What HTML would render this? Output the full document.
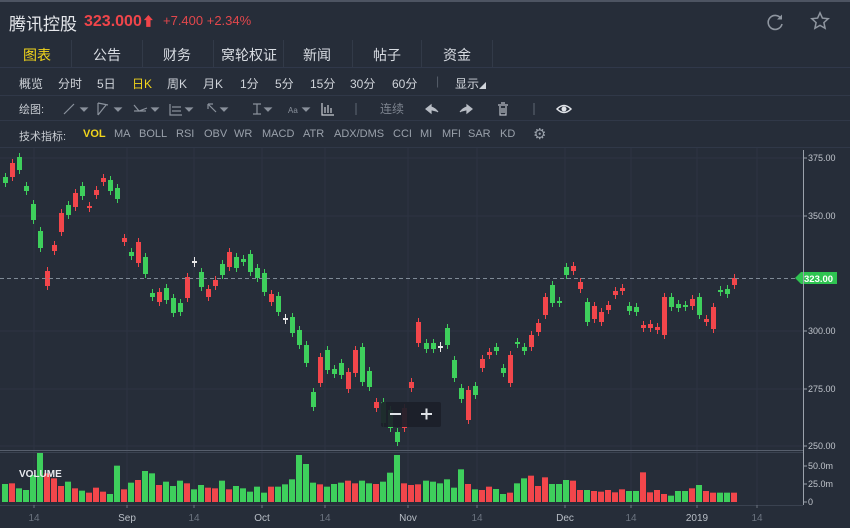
<!DOCTYPE html>
<html><head><meta charset="utf-8"><style>
*{margin:0;padding:0;box-sizing:border-box}
body{width:850px;height:528px;background:#262d39;font-family:"Liberation Sans","Noto Sans CJK SC",sans-serif;overflow:hidden;position:relative;color:#c9ced6}
.t{position:absolute;white-space:nowrap}
.line{position:absolute;left:0;width:850px;height:1px;background:#303848}
</style></head><body>
<div style="position:absolute;left:0;top:0;width:850px;height:2px;background:#4d5462"></div>
<div class="t" style="left:9px;top:10px;font-size:17px;color:#e6e8ec">腾讯控股</div>
<div class="t" style="left:84px;top:11px;font-size:16px;font-weight:bold;color:#f0454a">323.000<span style="font-size:13px">&#11014;</span></div>
<div class="t" style="left:163px;top:13px;font-size:13px;color:#e2474c">+7.400 +2.34%</div>
<svg style="position:absolute;left:766px;top:12px" width="20" height="20" viewBox="0 0 20 20"><path d="M15 6.5A7 7 0 1 0 16 12" fill="none" stroke="#8f96a0" stroke-width="1.6"/><path d="M16 2.5v5h-5z" fill="#8f96a0"/></svg>
<svg style="position:absolute;left:810px;top:11px" width="20" height="20" viewBox="0 0 20 20"><path d="M10 1.8l2.4 5.3 5.8.6-4.3 3.9 1.2 5.7L10 14.4l-5.1 2.9 1.2-5.7L1.8 7.7l5.8-.6z" fill="none" stroke="#8f96a0" stroke-width="1.5"/></svg>

<div style="position:absolute;left:0;top:38px;width:850px;height:30px;border-bottom:1px solid #30384a"></div>
<div class="t" style="left:23px;top:45px;font-size:14px;color:#f2d51c">图表</div>
<div class="t" style="left:93px;top:45px;font-size:14px;color:#d8dce2">公告</div>
<div class="t" style="left:163px;top:45px;font-size:14px;color:#d8dce2">财务</div>
<div class="t" style="left:221px;top:45px;font-size:14px;color:#d8dce2">窝轮权证</div>
<div class="t" style="left:303px;top:45px;font-size:14px;color:#d8dce2">新闻</div>
<div class="t" style="left:373px;top:45px;font-size:14px;color:#d8dce2">帖子</div>
<div class="t" style="left:443px;top:45px;font-size:14px;color:#d8dce2">资金</div>
<div style="position:absolute;top:40px;left:71px;width:1px;height:27px;background:#323a48"></div>
<div style="position:absolute;top:40px;left:142px;width:1px;height:27px;background:#323a48"></div>
<div style="position:absolute;top:40px;left:213px;width:1px;height:27px;background:#323a48"></div>
<div style="position:absolute;top:40px;left:283px;width:1px;height:27px;background:#323a48"></div>
<div style="position:absolute;top:40px;left:352px;width:1px;height:27px;background:#323a48"></div>
<div style="position:absolute;top:40px;left:421px;width:1px;height:27px;background:#323a48"></div>
<div style="position:absolute;top:40px;left:492px;width:1px;height:27px;background:#323a48"></div>

<div class="line" style="top:95px"></div>
<div style="font-size:12px;color:#d0d4da">
<div class="t" style="left:19px;top:75px">概览</div>
<div class="t" style="left:58px;top:75px">分时</div>
<div class="t" style="left:97px;top:75px">5日</div>
<div class="t" style="left:132px;top:75px;color:#f2d51c">日K</div>
<div class="t" style="left:167px;top:75px">周K</div>
<div class="t" style="left:203px;top:75px">月K</div>
<div class="t" style="left:240px;top:75px">1分</div>
<div class="t" style="left:275px;top:75px">5分</div>
<div class="t" style="left:310px;top:75px">15分</div>
<div class="t" style="left:350px;top:75px">30分</div>
<div class="t" style="left:392px;top:75px">60分</div>
<div class="t" style="left:436px;top:74px;color:#555d6a">|</div>
<div class="t" style="left:455px;top:75px">显示<span style="font-size:7px">◢</span></div>
</div>

<div class="line" style="top:120px"></div>
<div class="t" style="left:19px;top:101px;font-size:11px;color:#c8ccd2">绘图:</div>
<svg style="position:absolute;left:60px;top:99px" width="530" height="20" viewBox="0 0 530 20" fill="none" stroke="#8a919c" stroke-width="1.2">
<path d="M4 15L14 5"/><path d="M21 9l3 3 3-3z" fill="#8a919c"/>
<path d="M38 4v12M38 4l10 2M38 16l8-10"/><path d="M55 9l3 3 3-3z" fill="#8a919c"/>
<path d="M74 6l5 6 8-3M74 12h12"/><path d="M92 9l3 3 3-3z" fill="#8a919c"/>
<path d="M110 5v11h12M112 8h9M112 12h9"/><path d="M126 9l3 3 3-3z" fill="#8a919c"/>
<path d="M148 5h5M148 5v5M148 5l8 8"/><path d="M161 9l3 3 3-3z" fill="#8a919c"/>
<path d="M193 5h8M197 5v10M193 15h8"/><path d="M205 9l3 3 3-3z" fill="#8a919c"/>
<text x="228" y="14" font-size="8" fill="#8a919c" stroke="none" font-family="Liberation Sans">Aa</text><path d="M243 9l3 3 3-3z" fill="#8a919c"/>
<path d="M262 4v12h12M265 8v6M268 6v8M271 9v5" stroke="#c8ccd2"/>
<path d="M296 4v12" stroke="#555d6a"/>
<text x="320" y="14" font-size="12" fill="#7c838e" stroke="none" font-family="Noto Sans CJK SC">连续</text>
<path d="M366 10q5-5 12 3M366 10l5-4v8z" fill="#b8bdc5" stroke="#b8bdc5"/>
<path d="M412 10q-5-5-12 3M412 10l-5-4v8z" fill="#b8bdc5" stroke="#b8bdc5"/>
<path d="M438 6h10M441 4h4M440 7v9h6v-9M442 9v5M444 9v5" stroke="#b8bdc5"/>
<path d="M474 4v12" stroke="#555d6a"/>
<path d="M497 10q7-7 14 0q-7 7-14 0z" stroke="#e0e3e8" stroke-width="1.5"/><circle cx="504" cy="10" r="2.5" fill="#e0e3e8" stroke="none"/>
</svg>

<div class="line" style="top:147px"></div>
<div style="font-size:11px;color:#9aa1ab">
<div class="t" style="left:19px;top:128px;color:#c8ccd2">技术指标:</div>
<div class="t" style="left:83px;top:128px;color:#f2d51c;font-weight:bold">VOL</div>
<div class="t" style="left:114px;top:128px">MA</div>
<div class="t" style="left:139px;top:128px">BOLL</div>
<div class="t" style="left:176px;top:128px">RSI</div>
<div class="t" style="left:204px;top:128px">OBV</div>
<div class="t" style="left:234px;top:128px">WR</div>
<div class="t" style="left:262px;top:128px">MACD</div>
<div class="t" style="left:303px;top:128px">ATR</div>
<div class="t" style="left:334px;top:128px">ADX/DMS</div>
<div class="t" style="left:393px;top:128px">CCI</div>
<div class="t" style="left:420px;top:128px">MI</div>
<div class="t" style="left:442px;top:128px">MFI</div>
<div class="t" style="left:468px;top:128px">SAR</div>
<div class="t" style="left:500px;top:128px">KD</div>
<div class="t" style="left:533px;top:125px;font-size:15px">⚙</div>
</div>

<svg id="ch" style="position:absolute;left:0;top:148px" width="850" height="380" viewBox="0 148 850 380" font-family="Liberation Sans"></svg>
<script>
var s='';
var xs=[34,127,194,262,325,408,477,565,631,697,757];
xs.forEach(function(x){s+='<line x1="'+x+'" y1="148" x2="'+x+'" y2="505" stroke="#2d3442"/>';});
[158,216,331,389,446].forEach(function(y){s+='<line x1="0" y1="'+y+'" x2="803" y2="'+y+'" stroke="#2d3442"/>';});
var C=[[6,177,183,'g'],[13,163,177,'r'],[20,157,170,'g'],[27,186,191,'g'],[34,204,220,'g'],[41,231,248,'g'],[48,271,286,'r'],[55,245,251,'r'],[62,213,232,'r'],[69,205,215,'g'],[76,193,207,'r'],[83,186,196,'g'],[90,206,208,'r'],[97,190,195,'r'],[104,178,182,'r'],[111,180,191,'g'],[118,188,199,'g'],[125,238,242,'r'],[132,252,256,'g'],[139,242,263,'r'],[146,257,274,'g'],[153,293,297,'g'],[160,292,302,'r'],[167,288,300,'g'],[174,298,313,'g'],[181,303,312,'g'],[188,277,298,'r'],[195,261,262,'w'],[202,272,287,'g'],[209,289,297,'r'],[216,280,286,'r'],[223,264,275,'g'],[230,252,267,'r'],[237,257,268,'g'],[244,259,262,'g'],[251,254,272,'g'],[258,268,278,'g'],[265,273,292,'g'],[272,294,302,'r'],[279,296,312,'g'],[286,318,319,'w'],[293,317,333,'g'],[300,330,345,'g'],[307,345,363,'g'],[314,392,407,'g'],[321,357,383,'r'],[328,350,370,'g'],[335,369,374,'g'],[342,363,375,'g'],[349,372,389,'r'],[356,350,373,'r'],[363,347,382,'g'],[370,371,387,'g'],[377,402,408,'r'],[384,402,423,'g'],[391,410,428,'g'],[398,432,442,'g'],[405,408,428,'r'],[412,382,388,'r'],[419,322,343,'r'],[427,343,349,'g'],[434,343,349,'g'],[441,346,347,'w'],[448,328,345,'g'],[455,360,378,'g'],[462,388,399,'g'],[469,390,420,'r'],[476,386,395,'g'],[483,359,368,'r'],[490,352,355,'r'],[497,347,351,'g'],[504,368,373,'g'],[511,355,383,'r'],[518,342,344,'g'],[525,347,351,'g'],[532,335,347,'r'],[539,323,332,'r'],[546,297,315,'r'],[553,285,303,'g'],[560,301,303,'g'],[567,267,275,'g'],[574,266,271,'r'],[581,282,289,'r'],[588,302,322,'g'],[595,306,319,'r'],[602,312,322,'r'],[609,305,310,'r'],[616,291,295,'r'],[623,288,291,'r'],[630,306,311,'g'],[637,307,312,'g'],[644,325,328,'r'],[651,324,328,'r'],[658,327,330,'r'],[665,297,335,'r'],[672,297,307,'g'],[679,304,308,'g'],[686,305,307,'g'],[693,299,306,'r'],[700,297,315,'g'],[707,319,322,'r'],[714,307,329,'r'],[721,290,292,'g'],[728,289,294,'g'],[735,278,285,'r']];
var col={g:'#3ecf5c',r:'#f2464b',w:'#e8e8e8'};
var V=[132,130,145,150,105,38,100,115,138,125,145,152,158,143,155,162,77,148,128,120,93,100,135,125,138,122,130,148,135,143,145,122,148,138,145,155,140,158,140,140,133,118,45,72,128,133,140,132,128,122,130,122,130,132,125,98,45,130,135,133,122,125,130,118,143,88,132,148,150,140,147,162,158,130,115,107,138,112,132,132,120,122,150,150,153,155,150,157,148,153,153,97,157,150,162,167,153,153,145,135,153,158];
C.forEach(function(c,i){var x=c[0]-1,cl=col[c[3]];var h=Math.max(c[2]-c[1],2);
s+='<line x1="'+(x+0.5)+'" y1="'+(c[1]-4)+'" x2="'+(x+0.5)+'" y2="'+(c[1]+h+4)+'" stroke="'+cl+'"/>';
s+='<rect x="'+(x-2)+'" y="'+c[1]+'" width="5" height="'+h+'" fill="'+cl+'"/>';
var vz=V[Math.min(i,V.length-1)];var vy=440+vz/3;var vc=c[3]=='w'?'#3ecf5c':cl;
s+='<rect x="'+(x-3)+'" y="'+vy+'" width="6" height="'+(502-vy)+'" fill="'+vc+'"/>';});
s+='<line x1="0" y1="278.5" x2="795" y2="278.5" stroke="#7f8a96" stroke-dasharray="4,3"/>';
s+='<path d="M795 278l6-6h36v12h-36z" fill="#2fc451"/><text x="804" y="282" font-size="9.5" font-weight="bold" fill="#fff">323.00</text>';
s+='<line x1="0" y1="450.5" x2="803" y2="450.5" stroke="#565e6c"/><line x1="0" y1="452.5" x2="803" y2="452.5" stroke="#3a4250"/>';
s+='<line x1="803.5" y1="150" x2="803.5" y2="505" stroke="#9aa1ab"/>';
[[158,'375.00'],[216,'350.00'],[331,'300.00'],[389,'275.00'],[446,'250.00']].forEach(function(a){s+='<line x1="803" y1="'+a[0]+'" x2="807" y2="'+a[0]+'" stroke="#9aa1ab"/><text x="808" y="'+(a[0]+3)+'" font-size="9" fill="#c0c5cc">'+a[1]+'</text>';});
[[466,'50.0m'],[484,'25.0m'],[502,'0']].forEach(function(a){s+='<line x1="803" y1="'+a[0]+'" x2="807" y2="'+a[0]+'" stroke="#9aa1ab"/><text x="808" y="'+(a[0]+3)+'" font-size="9" fill="#c0c5cc">'+a[1]+'</text>';});
s+='<line x1="0" y1="505.5" x2="803" y2="505.5" stroke="#3a4250"/>';
var L=['14','Sep','14','Oct','14','Nov','14','Dec','14','2019','14'];
xs.forEach(function(x,i){var c=(L[i]=='14')?'#6c7480':'#b8bec6';s+='<line x1="'+x+'" y1="505" x2="'+x+'" y2="508" stroke="#6c7480"/><text x="'+x+'" y="521" font-size="10" text-anchor="middle" fill="'+c+'">'+L[i]+'</text>';});
s+='<text x="19" y="477" font-size="10" font-weight="bold" fill="#e8eaee">VOLUME</text>';
s+='<rect x="381" y="402" width="60" height="25" rx="2" fill="#1b2029" opacity="0.92"/><rect x="390" y="413" width="11" height="2" fill="#e0e3e8"/><rect x="421" y="413" width="11" height="2" fill="#e0e3e8"/><rect x="425.5" y="408.5" width="2" height="11" fill="#e0e3e8"/>';
document.getElementById('ch').innerHTML=s;
</script>
</body></html>
